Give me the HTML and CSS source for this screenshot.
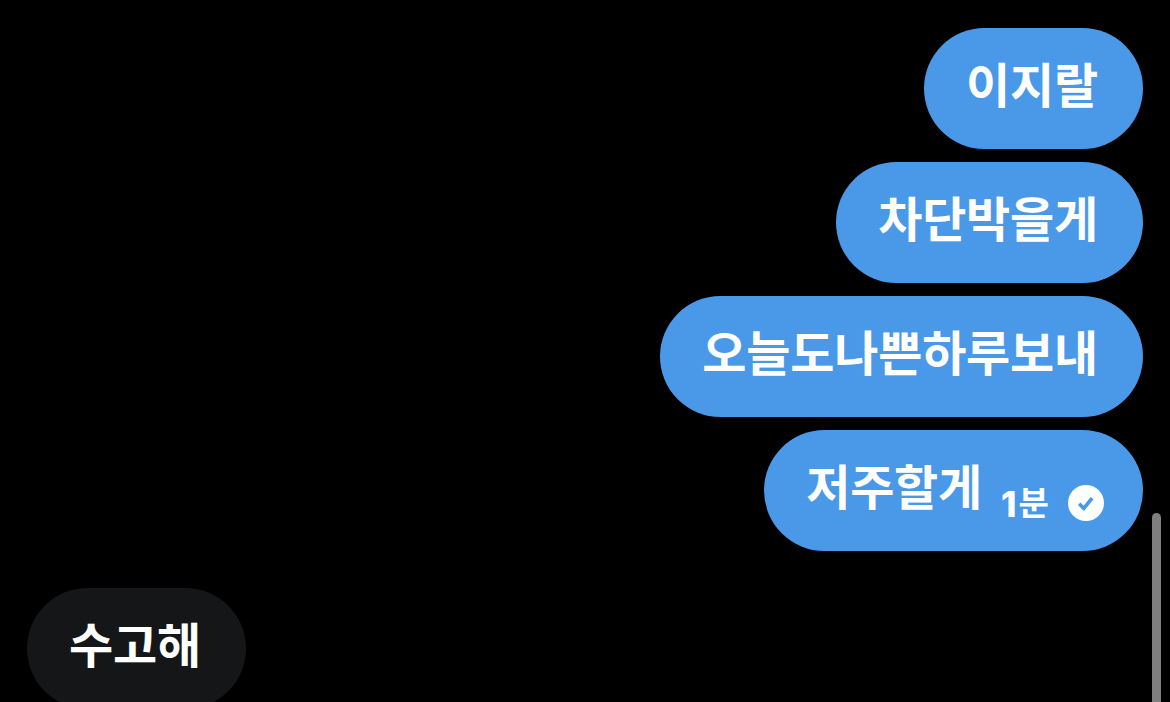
FILE: index.html
```html
<!DOCTYPE html>
<html lang="ko">
<head>
<meta charset="utf-8">
<title>Messages</title>
<link rel="stylesheet" href="styles.css">
</head>
<body>
<main class="chat">
  <div class="bubble sent"><span class="text">이지랄</span></div>
  <div class="bubble sent"><span class="text">차단박을게</span></div>
  <div class="bubble sent"><span class="text">오늘도나쁜하루보내</span></div>
  <div class="bubble sent last">
    <span class="text">저주할게</span>
    <span class="time"><span class="num">1</span>분</span>
    <svg class="check" viewBox="0 0 36 36" aria-hidden="true"><circle cx="18" cy="18" r="18" fill="#fff"/><path d="M11.2 18.8 15.8 23.4 24.1 13.2" fill="none" stroke="#4a99e9" stroke-width="3.6"/></svg>
  </div>
  <div class="bubble received"><span class="text">수고해</span></div>
</main>
<div class="scrollbar"></div>
</body>
</html>
```
FILE: styles.css
```css
* { box-sizing: border-box; }
body {
  margin: 0;
  height: 702px;
  overflow: hidden;
  background: #000;
  color: #fff;
  font-family: "Liberation Sans", "Noto Sans CJK KR", sans-serif;
  font-weight: 700;
}
.chat {
  display: flex;
  flex-direction: column;
  align-items: flex-end;
  gap: 13px;
  padding: 28px 27px 0;
}
.bubble {
  display: flex;
  flex-shrink: 0;
  height: 121px;
  padding: 29px 45px 0 42px;
  border-radius: 61px;
  white-space: nowrap;
}
.sent { background: #4a99e9; }
.received {
  align-self: flex-start;
  margin-top: 24px;
  background: #151617;
}
.text {
  font-size: 48px;
  line-height: 60px;
  letter-spacing: -0.2px;
}
.last { padding-right: 39px; }
.time {
  display: flex;
  margin: 26px 0 0 19px;
  font-size: 33px;
  line-height: 38px;
  letter-spacing: -0.4px;
}
.num {
  width: 17.5px;
  font-family: Inter, "Liberation Sans", sans-serif;
  font-size: 35px;
  font-weight: 800;
}
.check {
  width: 36px;
  height: 36px;
  margin: 26px 0 0 19.5px;
}
.scrollbar {
  position: absolute;
  top: 513px;
  left: 1152px;
  width: 9px;
  height: 220px;
  border-radius: 5px;
  background: #7f7f7f;
}
```
